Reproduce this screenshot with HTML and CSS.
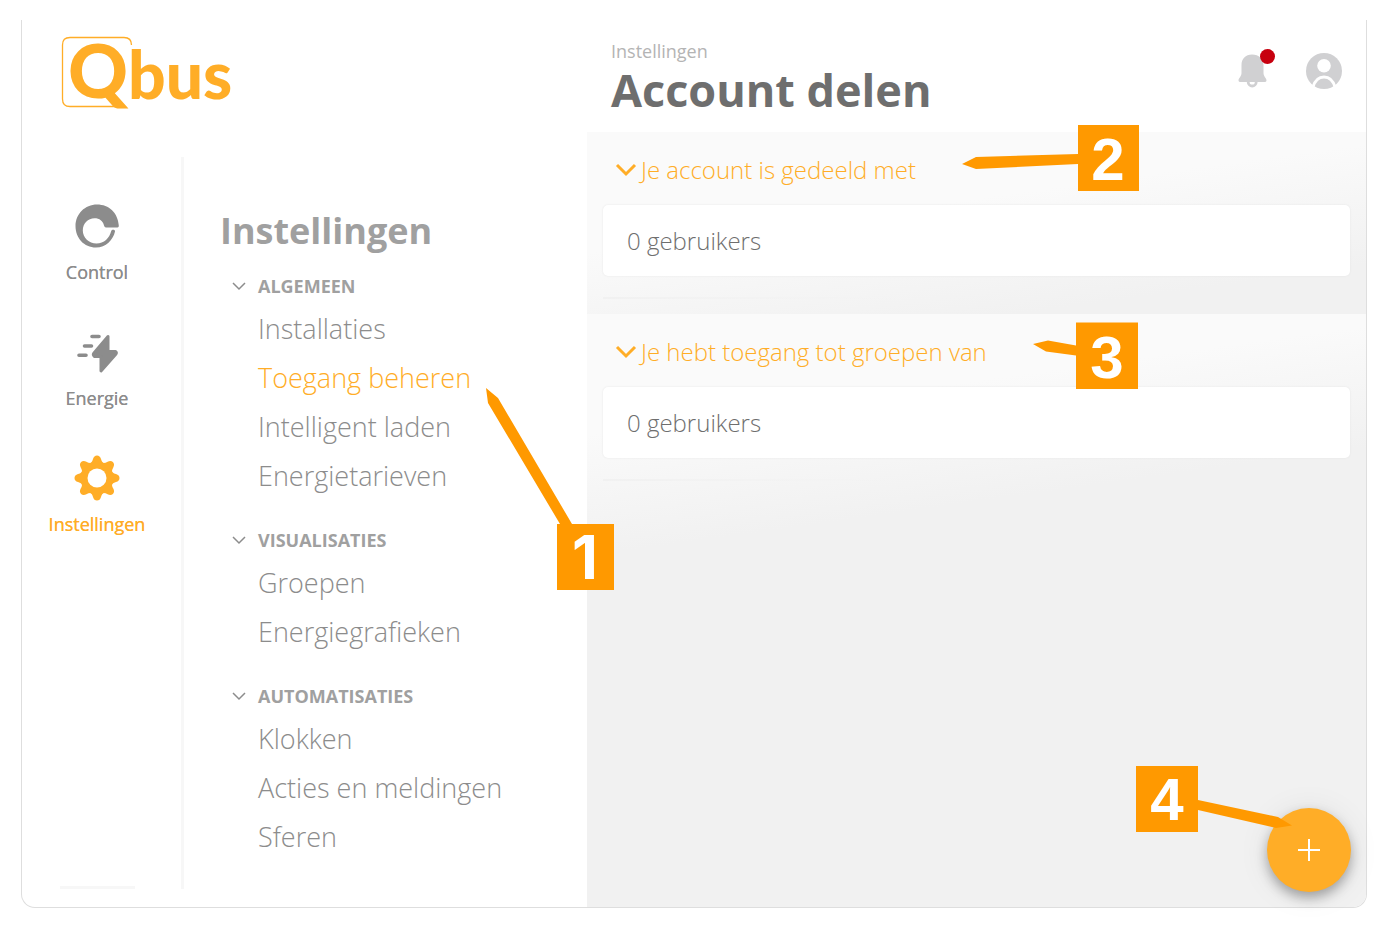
FILE: index.html
```
<!DOCTYPE html>
<html lang="nl">
<head>
    <meta charset="UTF-8">
    <meta name="viewport" content="width=device-width, initial-scale=1.0">
    <title>Qbus - Account delen</title>
    <link rel="stylesheet" href="styles.css">
</head>
<body>
    <div id="container">
        <aside class="sidebar">
            <a href="#" class="logo" aria-label="Qbus">
                <svg width="190" height="100" viewBox="0 0 190 100">
                    <path d="M59 70.500H9Q1.500 70.500 1.500 63V9Q1.500 1.500 9 1.500H63Q70.500 1.500 70.500 9" fill="none" stroke="#ffad27" stroke-width="1.300"/>
                    <text x="7" y="62" class="logo-q">Q</text>
                    <text x="67" y="63" class="logo-bus">bus</text>
                </svg>
            </a>
            <div class="sidebar-body">
                <nav class="rail">
                    <a href="#" class="rail-item">
                        <svg width="44" height="44" viewBox="0 0 44 44">
                            <path fill="#8c8c8c" fill-rule="evenodd" d="M22 .5C10 .5.5 10 .5 22S9 43.500 21 43.500C31 43.500 38 36 40 27.500C40.500 25.500 36.800 25 36.200 27C34.500 34 29 39.500 21.500 39.500C14 39.500 7.800 33.500 7.800 26.500C7.800 19.500 13 14.300 19.500 14.300C24.500 14.300 28 17 29 21.500Q29.500 23.500 31 23.500H42.500Q44 23.500 43.800 21.500C43 9 34 .5 22 .5Z"/>
                        </svg>
                        <span>Control</span>
                    </a>
                    <a href="#" class="rail-item">
                        <svg width="44" height="44" viewBox="0 0 44 44">
                            <path stroke="#8c8c8c" stroke-width="3.600" stroke-linecap="round" d="M17 6.500h7M9.500 16h7M4 25.300h7"/>
                            <path fill="#8c8c8c" stroke="#8c8c8c" stroke-width="3" stroke-linejoin="round" d="M33 6.500V21.500H40.500Q42 22.500 41 24L26 41V26.500H19.500Q17.500 25 19 23Z"/>
                        </svg>
                        <span>Energie</span>
                    </a>
                    <a href="#" class="rail-item active">
                        <svg width="46" height="44" viewBox="-23 -22 46 44">
                            <g fill="#ffad27">
                                <circle r="16.500"/>
                                <path id="tooth" d="M-8 -14Q-5 -15 -4 -19Q-3 -22.500 0 -22.500Q3 -22.500 4 -19Q5 -15 8 -14Z"/>
                                <use href="#tooth" transform="rotate(45)"/>
                                <use href="#tooth" transform="rotate(90)"/>
                                <use href="#tooth" transform="rotate(135)"/>
                                <use href="#tooth" transform="rotate(180)"/>
                                <use href="#tooth" transform="rotate(225)"/>
                                <use href="#tooth" transform="rotate(270)"/>
                                <use href="#tooth" transform="rotate(315)"/>
                            </g>
                            <circle r="9.500" fill="#fff"/>
                        </svg>
                        <span>Instellingen</span>
                    </a>
                    <hr>
                </nav>
                <nav class="menu">
                    <h2>Instellingen</h2>
                    <section>
                        <button type="button"><svg width="14" height="8" viewBox="0 0 14 8"><path d="M1 1l6 6 6-6"/></svg>ALGEMEEN</button>
                        <ul>
                            <li><a href="#">Installaties</a></li>
                            <li><a href="#" class="active">Toegang beheren</a></li>
                            <li><a href="#">Intelligent laden</a></li>
                            <li><a href="#">Energietarieven</a></li>
                        </ul>
                    </section>
                    <section>
                        <button type="button"><svg width="14" height="8" viewBox="0 0 14 8"><path d="M1 1l6 6 6-6"/></svg>VISUALISATIES</button>
                        <ul>
                            <li><a href="#">Groepen</a></li>
                            <li><a href="#">Energiegrafieken</a></li>
                        </ul>
                    </section>
                    <section>
                        <button type="button"><svg width="14" height="8" viewBox="0 0 14 8"><path d="M1 1l6 6 6-6"/></svg>AUTOMATISATIES</button>
                        <ul>
                            <li><a href="#">Klokken</a></li>
                            <li><a href="#">Acties en meldingen</a></li>
                            <li><a href="#">Sferen</a></li>
                        </ul>
                    </section>
                </nav>
            </div>
            <svg class="callout callout-1" width="128" height="202" viewBox="0 0 128 202">
                <path d="M0 0L12 10L86 136H128V202H71V136H74L2 15Z"/>
                <text x="99" y="191">1</text>
            </svg>
        </aside>
        <main>
            <header>
                <div>
                    <p>Instellingen</p>
                    <h1>Account delen</h1>
                </div>
                <div class="actions">
                    <button type="button" aria-label="Meldingen">
                        <svg width="38" height="40" viewBox="0 0 38 40">
                            <path fill="#d0d0d2" d="M14 3.500C7.500 3.500 3.500 8 3.500 14V22C3.500 25.500.5 27 .5 29.500Q.5 31 2.500 31H26.500Q28.500 31 28.500 29.500C28.500 27 25.500 25.500 25.500 22V14C25.500 8 21 3.500 14 3.500Z"/>
                            <path fill="none" stroke="#d0d0d2" stroke-width="2.800" d="M10.200 31a4 4 0 0 0 8 0"/>
                            <circle cx="29.500" cy="5.500" r="7.500" fill="#c7000f"/>
                        </svg>
                    </button>
                    <button type="button" aria-label="Profiel">
                        <svg width="36" height="36" viewBox="0 0 36 36">
                            <circle cx="18" cy="18" r="18" fill="#d0d0d2"/>
                            <circle cx="18" cy="12.800" r="6.800" fill="#fff"/>
                            <path d="M7 34Q10 24 18 24T29 34" fill="none" stroke="#fff" stroke-width="2.800"/>
                        </svg>
                    </button>
                </div>
            </header>
            <section class="share">
                <button type="button"><svg width="20" height="12" viewBox="0 0 20 12"><path d="M1 1l9 9 9-9"/></svg>Je account is gedeeld met</button>
                <div class="card">0 gebruikers</div>
                <hr>
                <svg class="callout callout-2" width="177" height="66" viewBox="0 0 177 66">
                    <path d="M0 39L14 32L116 29V0H177V66H116V39L14 44Z"/>
                    <text x="146" y="55">2</text>
                </svg>
            </section>
            <section class="share">
                <button type="button"><svg width="20" height="12" viewBox="0 0 20 12"><path d="M1 1l9 9 9-9"/></svg>Je hebt toegang tot groepen van</button>
                <div class="card">0 gebruikers</div>
                <hr>
                <svg class="callout callout-3" width="105" height="67" viewBox="0 0 105 67">
                    <path d="M0 22L15 18.500L43 23.500V.5H105V67H43V33.500L13 29.500Z"/>
                    <text x="74" y="56">3</text>
                </svg>
            </section>
            <button type="button" class="fab" aria-label="Toevoegen">
                <svg width="24" height="24" viewBox="0 0 24 24"><path d="M12 1v22M1 12h22" stroke="#fff" stroke-width="2"/></svg>
            </button>
            <svg class="callout callout-4" width="156" height="66" viewBox="0 0 156 66">
                <path d="M0 0H62V34L142 51L156 59.500L140 62L62 44V66H0Z"/>
                <text x="31" y="54">4</text>
            </svg>
        </main>
    </div>
</body>
</html>
```
FILE: styles.css
```
* {
    box-sizing: border-box;
}

body {
    margin: 0;
    padding: 20px 20px 20px 21px;
    background-color: #fff;
    color: #8c8c8c;
    font-family: "Open Sans", "Noto Sans", sans-serif;
}

#container {
    display: flex;
    min-height: calc(100vh - 40px);
    border: 1px solid #dedede;
    border-top: none;
    border-radius: 0 0 14px 14px;
}

h1, h2, p, ul {
    margin: 0;
    padding: 0;
}

ul {
    list-style: none;
}

a {
    color: inherit;
    text-decoration: none;
}

button {
    padding: 0;
    border: none;
    background: none;
    color: inherit;
    font: inherit;
    cursor: pointer;
}

svg {
    display: block;
    flex-shrink: 0;
    overflow: visible;
}

.sidebar {
    position: relative;
    display: flex;
    flex-direction: column;
    flex: 0 0 565px;
    padding-bottom: 18px;
}

.logo {
    height: 137px;
    padding: 16px 0 0 39px;
}

.logo text {
    fill: #ffad27;
    font-family: Lato, sans-serif;
    font-weight: 900;
}

.logo .logo-q {
    font-size: 74px;
}

.logo .logo-bus {
    font-size: 66px;
}

.sidebar-body {
    display: flex;
    flex: 1;
}

.rail {
    display: flex;
    flex-direction: column;
    align-items: center;
    gap: 46px;
    width: 162px;
    padding: 47px 9px 0 0;
    border-right: 3px solid #f7f7f7;
}

.rail-item {
    display: flex;
    flex-direction: column;
    align-items: center;
    justify-content: space-between;
    height: 80px;
    font-size: 18px;
    font-weight: 500;
    line-height: 24px;
    text-shadow: 0 0 currentColor;
}

.rail hr {
    width: 75px;
    height: 3px;
    margin: auto 0 0;
    border: none;
    background-color: #f7f7f7;
}

.active {
    color: #ffad27;
}

.menu {
    padding: 48px 0 0 36px;
}

.menu h2 {
    margin-bottom: 10px;
    color: #a0a0a0;
    font-size: 36px;
    line-height: 52px;
}

.menu section {
    margin-bottom: 21px;
    padding-left: 12px;
}

.menu button {
    display: flex;
    align-items: center;
    gap: 12px;
    height: 37px;
    color: #a0a0a0;
    font-size: 18px;
    font-weight: 700;
}

.menu button path {
    fill: none;
    stroke: #8c8c8c;
    stroke-width: 1.5;
}

.menu li {
    padding-left: 26px;
    font-size: 27px;
    font-weight: 300;
    line-height: 49px;
}

main {
    position: relative;
    flex: 1;
    background-color: #f1f1f1;
    border-radius: 0 0 13px 0;
}

header {
    display: flex;
    justify-content: space-between;
    height: 112px;
    padding: 19px 24px 0;
    background-color: #fff;
}

header p {
    color: #b4b4b4;
    font-size: 18px;
    line-height: 24px;
}

h1 {
    color: #6e6e6e;
    font-size: 45px;
    line-height: 54px;
}

.actions {
    display: flex;
    align-items: center;
    gap: 30px;
    height: 64px;
}

.share {
    position: relative;
    height: 182px;
    padding: 0 16px;
    background: linear-gradient(172deg, #fafafa 120px, #f1f1f1 240px);
}

.share:last-of-type {
    height: 260px;
}

.share button {
    display: flex;
    align-items: center;
    gap: 5px;
    height: 73px;
    padding: 2px 0 0 13px;
    color: #ffad27;
    font-size: 24px;
    font-weight: 300;
}

.share button path {
    fill: none;
    stroke: #ffad27;
    stroke-width: 3;
}

.card {
    padding: 0 24px;
    border-radius: 5px;
    background-color: #fff;
    box-shadow: 0 0 2px #e4e4e4;
    color: #6e6e6e;
    font-size: 24px;
    font-weight: 300;
    line-height: 71px;
}

.share hr {
    height: 2px;
    margin: 21px 0 0;
    border: none;
    background: linear-gradient(90deg, #f1f1f1, transparent 40%);
}

.fab {
    position: absolute;
    right: 15px;
    bottom: 15px;
    display: flex;
    align-items: center;
    justify-content: center;
    width: 84px;
    height: 84px;
    border-radius: 50%;
    background-color: #ffad27;
    box-shadow: 0 6px 12px rgba(0, 0, 0, 0.3), 0 2px 32px rgba(0, 0, 0, 0.08);
}

/* numbered markers */
.callout {
    position: absolute;
    z-index: 1;
    fill: #ff9900;
}

.callout text {
    fill: #fff;
    font-family: "Liberation Sans", Arial, sans-serif;
    font-size: 60px;
    font-weight: 700;
    text-anchor: middle;
}

.callout-1 {
    top: 368px;
    left: 464px;
}

.callout-1 text {
    font-family: Inter, sans-serif;
}

.callout-2 {
    top: -7px;
    left: 375px;
}

.callout-3 {
    top: 8px;
    left: 446px;
}

.callout-4 {
    right: 74px;
    bottom: 75px;
}
```
